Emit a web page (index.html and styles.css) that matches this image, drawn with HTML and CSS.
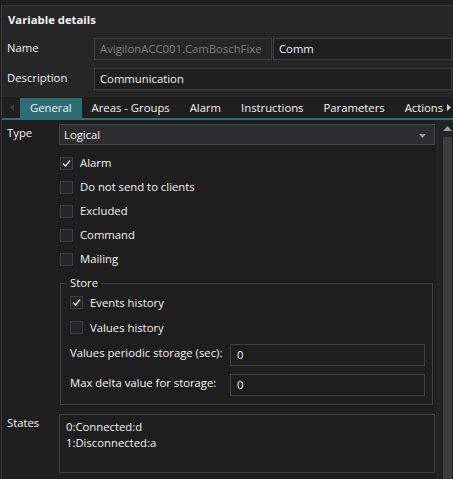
FILE: index.html
```html
<!DOCTYPE html>
<html>
<head>
<meta charset="utf-8">
<link rel="stylesheet" href="styles.css">
</head>
<body>
<div class="app">
  <div class="topstrip"></div>
  <div class="frame">
    <section class="header">
      <h1 class="title">Variable details</h1>
      <div class="field-row">
        <span class="field-label">Name</span>
        <div class="name-inputs">
          <div class="input disabled">AvigilonACC001.CamBoschFixe</div>
          <div class="input">Comm</div>
        </div>
      </div>
      <div class="field-row">
        <span class="field-label">Description</span>
        <div class="input">Communication</div>
      </div>
    </section>
    <nav class="tabs">
      <span class="tab-arrow left"><svg width="4" height="7" viewBox="0 0 4 7"><polygon points="4,0 4,7 0,3.5" fill="#3c3c3c"/></svg></span>
      <div class="tab-list">
        <span class="tab active">General</span>
        <span class="tab">Areas - Groups</span>
        <span class="tab">Alarm</span>
        <span class="tab">Instructions</span>
        <span class="tab">Parameters</span>
        <span class="tab">Actions</span>
      </div>
      <span class="tab-arrow right"><svg width="4" height="7" viewBox="0 0 4 7"><polygon points="0,0 4,3.5 0,7" fill="#cfcfcf"/></svg></span>
    </nav>
    <div class="tab-underline"></div>
    <div class="content">
      <div class="form">
        <div class="form-row">
          <span class="form-label">Type</span>
          <div class="dropdown">
            <span>Logical</span>
            <svg class="dd-arrow" width="7" height="4" viewBox="0 0 7 4"><polygon points="0,0 7,0 3.5,4" fill="#9a9a9a"/></svg>
          </div>
        </div>
        <div class="checklist">
          <div class="check-row"><span class="box"><svg width="11" height="11" viewBox="0 0 11 11"><polyline points="2,5.5 4.5,8 9,2.5" fill="none" stroke="#e0e0e0" stroke-width="1.3"/></svg></span>Alarm</div>
          <div class="check-row"><span class="box"></span>Do not send to clients</div>
          <div class="check-row"><span class="box"></span>Excluded</div>
          <div class="check-row"><span class="box"></span>Command</div>
          <div class="check-row"><span class="box"></span>Mailing</div>
        </div>
        <fieldset class="store">
          <legend>Store</legend>
          <div class="store-inner">
            <div class="check-row store-row"><span class="box"><svg width="11" height="11" viewBox="0 0 11 11"><polyline points="2,5.5 4.5,8 9,2.5" fill="none" stroke="#e0e0e0" stroke-width="1.3"/></svg></span>Events history</div>
            <div class="check-row store-row"><span class="box"></span>Values history</div>
            <div class="value-row first">
              <span class="value-label">Values periodic storage (sec):</span>
              <div class="input">0</div>
            </div>
            <div class="value-row">
              <span class="value-label">Max delta value for storage:</span>
              <div class="input">0</div>
            </div>
          </div>
        </fieldset>
        <div class="form-row states">
          <span class="form-label">States</span>
          <div class="textarea">0:Connected:d<br>1:Disconnected:a</div>
        </div>
      </div>
      <div class="scrollbar">
        <svg class="sb-up" width="9" height="5" viewBox="0 0 9 5"><polygon points="0,5 9,5 4.5,0" fill="#9a9a9a"/></svg>
        <div class="sb-thumb"></div>
      </div>
    </div>
  </div>
</div>
</body>
</html>
```
FILE: styles.css
```css
* { box-sizing: border-box; }
html, body {
  margin: 0;
  padding: 0;
  background: #1e1e1e;
  overflow: hidden;
}
body {
  font-family: "Open Sans", "Noto Sans", sans-serif;
  font-size: 11.3px;
  line-height: 16px;
  color: #f3f3f3;
}
.app {
  width: 453px;
  height: 479px;
  display: flex;
  flex-direction: column;
}
.topstrip {
  height: 5px;
  background: #1f1f1f;
}
.frame {
  flex: 1;
  margin-left: 1px;
  border-left: 1px solid #383838;
  border-top: 1px solid #3a3a3a;
  display: flex;
  flex-direction: column;
}
.header {
  background: #262626;
  padding: 0 1px 7px 0;
}
.title {
  margin: 0 0 10px 0;
  padding: 6px 0 0 6px;
  font-size: 11.3px;
  font-weight: 700;
  line-height: 16px;
}
.field-row {
  display: grid;
  grid-template-columns: 92px 1fr;
  align-items: start;
}
.field-row + .field-row { margin-top: 8px; }
.field-label {
  padding: 2px 0 0 5px;
}
.name-inputs {
  display: grid;
  grid-template-columns: 178px 1fr;
  column-gap: 1px;
}
.input {
  height: 22px;
  border: 1px solid #3f3f42;
  background: #1e1e1e;
  padding: 2px 5px;
  white-space: nowrap;
  overflow: hidden;
}
.input.disabled {
  background: #262626;
  color: #7f7f7f;
}
.tabs {
  height: 21px;
  background: #1f1f1f;
  display: flex;
  align-items: flex-end;
}
.tab-arrow {
  display: flex;
  align-items: center;
  height: 21px;
  flex: none;
}
.tab-arrow.left { width: 18px; padding-left: 8px; }
.tab-arrow.right { width: 9px; padding-left: 3px; }
.tab-list {
  flex: 1;
  display: flex;
  overflow: hidden;
  white-space: nowrap;
}
.tab {
  height: 20px;
  padding: 2px 10px 0;
  color: #f3f3f3;
  flex: none;
}
.tab.active {
  background: #2c6e73;
}
.tab-underline {
  height: 2px;
  background: #2c6e73;
}
.content {
  flex: 1;
  display: flex;
  background: #1e1e1e;
}
.form {
  flex: 1;
  padding: 4px 1px 0 0;
}
.form-row {
  display: grid;
  grid-template-columns: 57px 1fr;
  align-items: start;
}
.form-label { padding: 1px 0 0 5px; }
.dropdown {
  height: 21px;
  background: #2d2d30;
  border: 1px solid #434346;
  padding: 2px 4px;
  display: flex;
  align-items: flex-start;
  justify-content: space-between;
}
.dd-arrow { margin: 7px 4px 0 0; }
.checklist {
  margin: 6px 0 0 58px;
}
.check-row {
  height: 24px;
  display: flex;
  align-items: center;
  gap: 7px;
}
.box {
  width: 13px;
  height: 13px;
  border: 1px solid #3d3d40;
  background: #262628;
  display: flex;
  align-items: center;
  justify-content: center;
  flex: none;
}
.store {
  margin: 4px 2px 0 58px;
  padding: 0 7px 8px 6px;
  border: 1px solid #3f3f42;
  min-width: 0;
}
.store legend {
  padding: 0 3px;
  line-height: 16px;
}
.store-inner {
  padding-left: 3px;
}
.store-row {
  height: 25px;
}
.store-inner .store-row:first-child { margin-top: -1px; }
.value-row {
  display: grid;
  grid-template-columns: 160px 1fr;
  align-items: start;
  margin-top: 8px;
}
.value-row.first { margin-top: 4px; }
.value-label { padding-top: 1px; white-space: nowrap; }
.value-row .input { padding-left: 6px; }
.states { margin-top: 9px; }
.textarea {
  height: 59px;
  border: 1px solid #3f3f42;
  background: #1e1e1e;
  padding: 4px 6px;
}
.scrollbar {
  width: 17px;
  background: #232323;
  display: flex;
  flex-direction: column;
  align-items: flex-end;
  padding: 6px 1px 0 0;
}
.sb-up { flex: none; }
.sb-thumb {
  flex: 1;
  width: 9px;
  margin-top: 6px;
  background: #3e3e42;
}
```
